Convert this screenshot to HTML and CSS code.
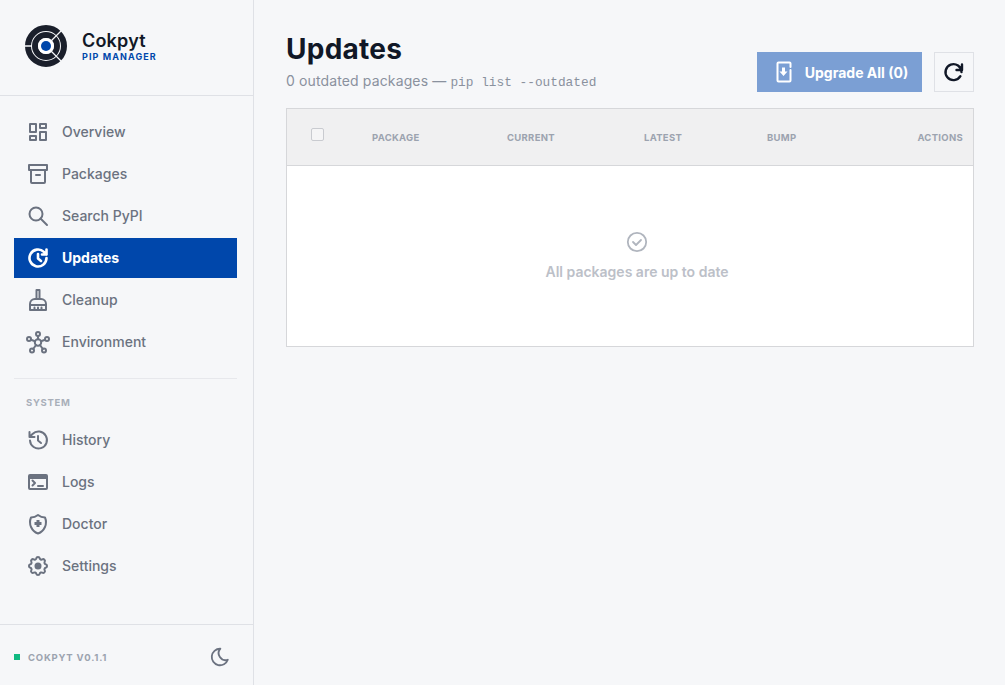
FILE: index.html
```html
<!DOCTYPE html>
<html lang="en">
<head>
<meta charset="utf-8">
<title>Cokpyt</title>
<link rel="stylesheet" href="styles.css">
</head>
<body>
<div class="app">
  <aside class="sidebar">
    <div class="brand">
      <svg class="logo" viewBox="0 0 44 44" width="44" height="44" fill="none">
        <circle cx="22" cy="22" r="18" stroke="#1a1f2b" stroke-width="6"/>
        <circle cx="22" cy="22" r="11" stroke="#1a1f2b" stroke-width="6"/>
        <circle cx="22" cy="22" r="8" fill="#fff"/>
        <path d="M0 22h8M27 17L41 3M27 27l14 14" stroke="#f6f7f9" stroke-width="1.300"/>
        <circle cx="22" cy="22" r="5" fill="#0047ab"/>
      </svg>
      <div class="brand-text">
        <div class="brand-name">Cokpyt</div>
        <div class="brand-sub">PIP MANAGER</div>
      </div>
    </div>
    <nav class="nav">
      <a class="nav-item"><svg class="icon" viewBox="0 0 24 24"><path d="M4 4h6v8H4zM4 16h6v4H4zM14 12h6v8h-6zM14 4h6v4h-6z"/></svg><span class="nav-text">Overview</span></a>
      <a class="nav-item"><svg class="icon" viewBox="0 0 24 24"><path d="M3 3h18v5H3zM5 8v12a1 1 0 0 0 1 1h12a1 1 0 0 0 1-1V8M10 13h4"/></svg><span class="nav-text">Packages</span></a>
      <a class="nav-item"><svg class="icon" viewBox="0 0 24 24"><circle cx="10" cy="10" r="6.500"/><path d="M21 21l-6.500-6.500"/></svg><span class="nav-text">Search PyPI</span></a>
      <a class="nav-item active"><svg class="icon" viewBox="0 0 24 24"><path d="M20.500 12a8.500 8.500 0 1 1-2.600-6.100L20.500 8.500M20.500 3.500v5H16M12 8v4.500l3 2.500"/></svg><span class="nav-text">Updates</span></a>
      <a class="nav-item"><svg class="icon" viewBox="0 0 24 24"><path d="M10.500 2h3v9h-3zM10.500 11H9a5 5 0 0 0-5 5v6h16v-6a5 5 0 0 0-5-5h-1.500M4 17h16M8.500 22v-2.500M12 22v-2.500M15.500 22v-2.500"/></svg><span class="nav-text">Cleanup</span></a>
      <a class="nav-item"><svg class="icon" viewBox="0 0 24 24"><circle cx="12" cy="12.500" r="3.200"/><circle cx="12" cy="4" r="2"/><circle cx="3" cy="9" r="2"/><circle cx="21" cy="9" r="2"/><circle cx="6" cy="20.500" r="2"/><circle cx="18" cy="20.500" r="2"/><path d="M12 6v3.300M5 9.800l4 1.400M19 9.800l-4 1.400M7.200 19l2.800-4M16.800 19L14 15"/></svg><span class="nav-text">Environment</span></a>
      <div class="nav-divider"></div>
      <div class="nav-label">SYSTEM</div>
      <a class="nav-item"><svg class="icon" viewBox="0 0 24 24"><path d="M12 8v4.500l3 2.500M4 12.500A8.500 8.500 0 1 0 6.500 6L3.500 9M3.500 4v5h5"/></svg><span class="nav-text">History</span></a>
      <a class="nav-item"><svg class="icon" viewBox="0 0 24 24"><path d="M4 5h16a1 1 0 0 1 1 1v12a1 1 0 0 1-1 1H4a1 1 0 0 1-1-1V6a1 1 0 0 1 1-1z"/><path class="thick" d="M3 7.500h18"/><path d="M6.500 10.500l2.500 2.500-2.500 2.500M12 16h5"/></svg><span class="nav-text">Logs</span></a>
      <a class="nav-item"><svg class="icon" viewBox="0 0 24 24"><path d="M12 3a12 12 0 0 0 7 2.500A12 12 0 0 1 12 21.500 12 12 0 0 1 5 5.500 12 12 0 0 0 12 3z"/><path class="thick" d="M8.500 11.500h7M12 8v7"/></svg><span class="nav-text">Doctor</span></a>
      <a class="nav-item"><svg class="icon" viewBox="0 0 24 24"><path d="M10.300 4.300c.4-1.800 3-1.800 3.400 0a1.700 1.700 0 0 0 2.600 1.100c1.500-.9 3.300.8 2.400 2.400a1.700 1.700 0 0 0 1 2.500c1.800.4 1.800 3 0 3.400a1.700 1.700 0 0 0-1 2.600c.9 1.500-.9 3.300-2.400 2.400a1.700 1.700 0 0 0-2.600 1c-.4 1.800-3 1.800-3.400 0a1.700 1.700 0 0 0-2.600-1c-1.500.9-3.300-.9-2.400-2.400a1.700 1.700 0 0 0-1-2.600c-1.800-.4-1.800-3 0-3.400a1.700 1.700 0 0 0 1-2.500c-.9-1.600.9-3.300 2.400-2.400 1 .6 2.300.1 2.600-1.100z"/><circle class="solid" cx="12" cy="12" r="3.500"/></svg><span class="nav-text">Settings</span></a>
    </nav>
    <footer class="side-footer">
      <span class="status-dot"></span>
      <span class="version">COKPYT V0.1.1</span>
      <svg class="icon moon" viewBox="0 0 24 24"><path d="M12 3h.4a7.500 7.500 0 0 0 8.100 12A9 9 0 1 1 12 3z"/></svg>
    </footer>
  </aside>
  <main class="main">
    <header class="page-head">
      <div>
        <h1 class="title">Updates</h1>
        <p class="subtitle">0 outdated packages — <code class="cmd">pip list --outdated</code></p>
      </div>
      <div class="actions">
        <button class="btn-primary"><svg class="icon btn-icon" viewBox="0 0 24 24"><path d="M18.500 7V3.500a1 1 0 0 0-1-1h-11a1 1 0 0 0-1 1v17a1 1 0 0 0 1 1h11a1 1 0 0 0 1-1V10"/><path class="solid-arrow" d="M10 7.500h3v4h2.500L11.500 16l-4-4.500H10z"/></svg><span>Upgrade All (0)</span></button>
        <button class="btn-icon-only"><svg class="icon refresh" viewBox="0 0 24 24"><path d="M19.500 12a8 8 0 1 0-1.100 4.200M20 4.500v5.500h-5.500"/></svg></button>
      </div>
    </header>
    <section class="table">
      <div class="table-head">
        <span class="check-cell"><span class="checkbox"></span></span>
        <span>PACKAGE</span>
        <span>CURRENT</span>
        <span>LATEST</span>
        <span>BUMP</span>
        <span class="right">ACTIONS</span>
      </div>
      <div class="empty">
        <svg class="icon empty-icon" viewBox="0 0 24 24"><circle cx="12" cy="12" r="9.200"/><path d="M8 12l3 3 5-5"/></svg>
        <div class="empty-text">All packages are up to date</div>
      </div>
    </section>
  </main>
</div>
</body>
</html>
```
FILE: styles.css
```css
* { box-sizing: border-box; }
html, body { margin: 0; height: 100%; }
body {
  font-family: Inter, "Liberation Sans", sans-serif;
  background: #f6f7f9;
  color: #6b7280;
  overflow: hidden;
}
.app { display: flex; height: 685px; }

.sidebar {
  width: 254px;
  flex: none;
  display: flex;
  flex-direction: column;
  border-right: 1px solid #dfe1e6;
  background: #f6f7f9;
}
.brand {
  height: 96px;
  flex: none;
  display: flex;
  align-items: center;
  gap: 14px;
  padding: 0 24px 4px;
  border-bottom: 1px solid #dfe1e6;
}
.logo { flex: none; }
.brand-text { display: flex; flex-direction: column; }
.brand-name {
  font-size: 18px;
  font-weight: 600;
  line-height: 21px;
  color: #111827;
  letter-spacing: 0.2px;
}
.brand-sub {
  font-size: 9px;
  font-weight: 700;
  line-height: 11px;
  color: #0047ab;
  letter-spacing: 1.100px;
}
.nav {
  flex: 1;
  display: flex;
  flex-direction: column;
  gap: 2px;
  padding: 16px 16px 0 14px;
}
.nav-item {
  height: 40px;
  display: flex;
  align-items: center;
  gap: 12px;
  padding-left: 12px;
  font-size: 14px;
  font-weight: 500;
  color: #6b7280;
}
.nav-text { margin-bottom: 2px; }
.nav-item.active {
  background: #0047ab;
  color: #fff;
  font-weight: 700;
}
.nav-item.active .icon { stroke-width: 2.600; }
.icon {
  width: 24px;
  height: 24px;
  flex: none;
  fill: none;
  stroke: currentColor;
  stroke-width: 2;
  stroke-linecap: round;
  stroke-linejoin: round;
}
.icon .thick { stroke-width: 3; stroke-linecap: butt; }
.icon .solid { fill: currentColor; stroke-width: 0; }
.icon .solid-arrow { fill: currentColor; stroke-width: 0; }
.nav-divider {
  height: 1px;
  background: #e7e8ec;
  margin: 14px 0 0;
}
.nav-label {
  font-size: 9.500px;
  font-weight: 700;
  letter-spacing: 0.700px;
  line-height: 12px;
  color: #a9afb9;
  padding: 16px 0 9px 12px;
}
.side-footer {
  height: 61px;
  flex: none;
  display: flex;
  align-items: center;
  padding: 4px 22px 0 14px;
  border-top: 1px solid #dfe1e6;
}
.status-dot {
  width: 6px;
  height: 6px;
  background: #10b981;
  flex: none;
}
.version {
  flex: 1;
  margin-left: 8px;
  font-size: 9.500px;
  font-weight: 700;
  letter-spacing: 0.800px;
  color: #9ca3af;
}
.moon { width: 22px; height: 22px; color: #6b7280; }

.main { flex: 1; padding: 0 31px 0 32px; min-width: 0; }
.page-head {
  height: 108px;
  display: flex;
  justify-content: space-between;
  align-items: flex-start;
}
.title {
  margin: 32px 0 0;
  font-size: 28px;
  line-height: 34px;
  font-weight: 700;
  color: #111827;
  letter-spacing: 0.250px;
}
.subtitle {
  margin: 6px 0 0;
  font-size: 14px;
  line-height: 18px;
  letter-spacing: 0.130px;
  color: #8a919e;
}
.cmd { font-family: "Liberation Mono", monospace; font-size: 12.800px; letter-spacing: 0; }
.actions { display: flex; gap: 12px; margin-top: 52px; }
.btn-primary {
  width: 165px;
  height: 40px;
  display: flex;
  align-items: center;
  justify-content: center;
  gap: 9px;
  border: 0;
  background: #7b9fd4;
  color: #fff;
  font: 700 14px Inter, "Liberation Sans", sans-serif;
  padding: 0 0 0 1px;
}
.btn-icon-only {
  width: 40px;
  height: 40px;
  display: flex;
  align-items: center;
  justify-content: center;
  padding: 0;
  background: #f6f7f9;
  border: 1px solid #dfe1e6;
  color: #111827;
}
.refresh { stroke-width: 2.400; }

.table {
  height: 239px;
  background: #fff;
  border: 1px solid #d6d7da;
}
.table-head {
  height: 57px;
  display: grid;
  grid-template-columns: 85px 135px 137px 123px 1fr auto;
  align-items: center;
  padding-right: 10px;
  background: #f0f0f1;
  border-bottom: 1px solid #d6d7da;
  font-size: 9.500px;
  font-weight: 700;
  letter-spacing: 0.300px;
  color: #9ca3af;
}
.check-cell { padding-left: 24px; display: flex; margin-top: -5px; }
.checkbox {
  width: 13px;
  height: 13px;
  background: #f5f5f6;
  border: 1px solid #c9cbd0;
  border-radius: 2px;
}
.right { text-align: right; }
.empty {
  display: flex;
  flex-direction: column;
  align-items: center;
  padding: 64px 0 0 14px;
}
.empty-icon { color: #b0b5be; stroke-width: 1.800; }
.empty-text {
  margin-top: 9px;
  font-size: 14px;
  line-height: 18px;
  font-weight: 600;
  color: #bcc0c8;
}
```
